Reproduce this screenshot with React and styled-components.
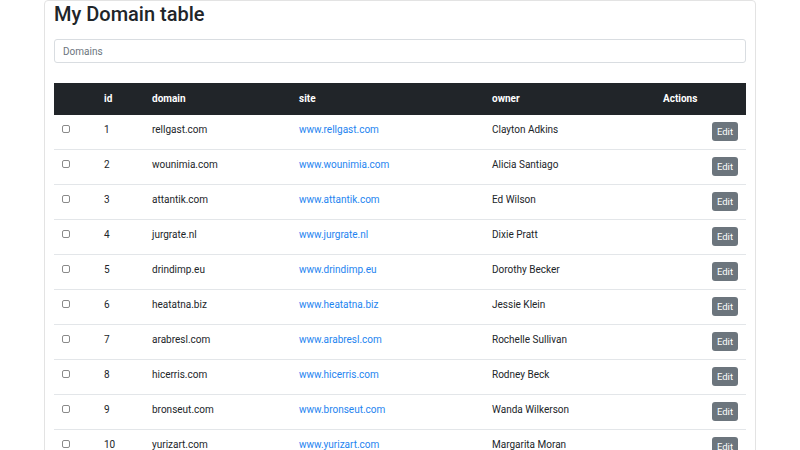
import { Fragment } from 'react';
import styled, { createGlobalStyle } from 'styled-components';

const GlobalStyle = createGlobalStyle`
  body {
    margin: 0;
    background: #fff;
    font-family: Roboto, 'Liberation Sans', sans-serif;
    color: #212529;
  }
`;

const Card = styled.div`
  width: 712px;
  margin: 0 auto;
  box-sizing: border-box;
  border: 1px solid #e3e3e3;
  border-radius: 4px;
  padding: 0 9px 20px;
`;

const Title = styled.h3`
  margin: 0;
  font-size: 20px;
  font-weight: 500;
  line-height: 26px;
  color: #212529;
`;

const SearchInput = styled.input`
  display: block;
  width: 100%;
  box-sizing: border-box;
  height: 24px;
  margin: 12px 0 20px;
  padding: 0 8px;
  border: 1px solid #d9dde1;
  border-radius: 3px;
  font-family: inherit;
  font-size: 10px;
  color: #495057;
  &::placeholder {
    color: #6c757d;
  }
`;

const Table = styled.table`
  width: 100%;
  table-layout: fixed;
  border-collapse: collapse;
  font-size: 10px;
`;

// widths are the content width, padding of 8px on each side comes on top
const HeadCell = styled.th`
  background: #212529;
  color: #fff;
  font-weight: 700;
  text-align: left;
  padding: 8px;
  line-height: 16px;
  width: ${(p) => (p.$w ? `${p.$w}px` : 'auto')};
`;

const Row = styled.tr`
  border-bottom: 1px solid #e3e6e9;
`;

const Cell = styled.td`
  vertical-align: top;
  padding: 7px 8px 8px;
  line-height: 16px;
  text-align: ${(p) => (p.$right ? 'right' : 'left')};
`;

const Check = styled.input.attrs({ type: 'checkbox' })`
  appearance: none;
  display: block;
  width: 8px;
  height: 8px;
  margin: 3px 0 0;
  border: 1px solid #8a8a8a;
  border-radius: 2px;
  background: #fff;
`;

const SiteLink = styled.a`
  color: #1e84f0;
  text-decoration: none;
`;

const EditButton = styled.button`
  height: 19px;
  padding: 0 5px;
  border: none;
  border-radius: 3px;
  background: #6c757d;
  color: #fff;
  font-family: inherit;
  font-size: 9.5px;
  line-height: 19px;
  vertical-align: top;
`;

const domains = [
  { id: 1, domain: 'rellgast.com', owner: 'Clayton Adkins' },
  { id: 2, domain: 'wounimia.com', owner: 'Alicia Santiago' },
  { id: 3, domain: 'attantik.com', owner: 'Ed Wilson' },
  { id: 4, domain: 'jurgrate.nl', owner: 'Dixie Pratt' },
  { id: 5, domain: 'drindimp.eu', owner: 'Dorothy Becker' },
  { id: 6, domain: 'heatatna.biz', owner: 'Jessie Klein' },
  { id: 7, domain: 'arabresl.com', owner: 'Rochelle Sullivan' },
  { id: 8, domain: 'hicerris.com', owner: 'Rodney Beck' },
  { id: 9, domain: 'bronseut.com', owner: 'Wanda Wilkerson' },
  { id: 10, domain: 'yurizart.com', owner: 'Margarita Moran' },
];

const App = () => {
  return (
    <Fragment>
      <GlobalStyle />
      <Card>
        <Title>My Domain table</Title>
        <SearchInput placeholder='Domains' />
        <Table>
          <thead>
            <tr>
              <HeadCell $w={26}></HeadCell>
              <HeadCell $w={32}>id</HeadCell>
              <HeadCell $w={131}>domain</HeadCell>
              <HeadCell $w={177}>site</HeadCell>
              <HeadCell $w={155}>owner</HeadCell>
              <HeadCell>Actions</HeadCell>
            </tr>
          </thead>
          <tbody>
            {domains.map((d) => (
              <Row key={d.id}>
                <Cell>
                  <Check />
                </Cell>
                <Cell>{d.id}</Cell>
                <Cell>{d.domain}</Cell>
                <Cell>
                  <SiteLink href='#'>www.{d.domain}</SiteLink>
                </Cell>
                <Cell>{d.owner}</Cell>
                <Cell $right>
                  <EditButton>Edit</EditButton>
                </Cell>
              </Row>
            ))}
          </tbody>
        </Table>
      </Card>
    </Fragment>
  );
};

export default App;
